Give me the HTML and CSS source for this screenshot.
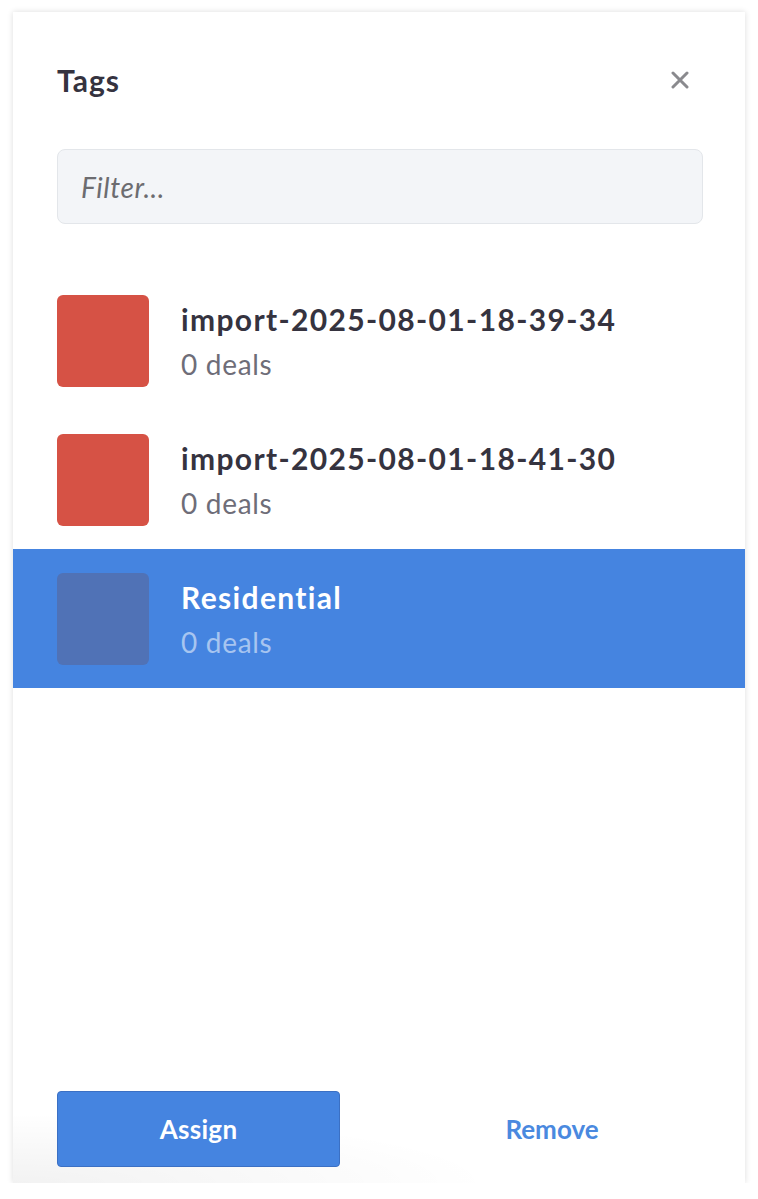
FILE: index.html
```html
<!DOCTYPE html>
<html>
<head>
<meta charset="utf-8">
<link rel="stylesheet" href="styles.css">
</head>
<body>
<div class="panel">
  <div class="header">
    <h1 class="title">Tags</h1>
    <span class="close" aria-label="Close">
      <svg width="18" height="18" viewBox="0 0 18 18"><path d="M2 2L16 16M16 2L2 16" stroke="#8a8a8e" stroke-width="3" stroke-linecap="round"/></svg>
    </span>
  </div>
  <div class="filter-wrap">
    <div class="filter">Filter...</div>
  </div>
  <ul class="tags">
    <li class="tag">
      <span class="swatch red"></span>
      <div class="info">
        <div class="name">import-2025-08-01-18-39-34</div>
        <div class="count">0 deals</div>
      </div>
    </li>
    <li class="tag">
      <span class="swatch red"></span>
      <div class="info">
        <div class="name">import-2025-08-01-18-41-30</div>
        <div class="count">0 deals</div>
      </div>
    </li>
    <li class="tag selected">
      <span class="swatch blue"></span>
      <div class="info">
        <div class="name">Residential</div>
        <div class="count">0 deals</div>
      </div>
    </li>
  </ul>
  <div class="footer">
    <button class="btn primary">Assign</button>
    <button class="btn link">Remove</button>
  </div>
</div>
</body>
</html>
```
FILE: styles.css
```css
* { box-sizing: border-box; }
html, body { margin: 0; padding: 0; background: #ffffff; }
body {
  font-family: Lato, "Open Sans", sans-serif;
  color: #35333f;
  padding: 12px 13px 0 13px;
}
.panel {
  width: 732px;
  height: 1171px;
  background: #fff;
  box-shadow: 0 0 6px rgba(0,0,0,0.14);
  display: flex;
  flex-direction: column;
}
.header {
  display: flex;
  align-items: center;
  justify-content: space-between;
  padding: 48px 56px 0 44px;
}
.title {
  margin: 0;
  font-size: 30px;
  font-weight: 700;
  letter-spacing: 1px;
  color: #35333f;
  line-height: 40px;
}
.close { display: flex; }
.filter-wrap { padding: 49px 42px 0 44px; }
.filter {
  height: 75px;
  background: #f3f5f8;
  border: 1.5px solid #e3e6ea;
  border-radius: 8px;
  display: flex;
  align-items: center;
  padding-left: 23px;
  font-size: 28px;
  font-style: italic;
  letter-spacing: 0.6px;
  color: #6c6c70;
}
.tags {
  list-style: none;
  margin: 0;
  padding: 47px 0 0 0;
  flex: 1;
}
.tag {
  display: flex;
  align-items: center;
  height: 139px;
  padding-left: 44px;
}
.swatch {
  width: 92px;
  height: 92px;
  border-radius: 6px;
  flex: none;
}
.swatch.red { background: #d65245; }
.swatch.blue { background: #5072b6; }
.info { margin-left: 32px; }
.name {
  font-size: 30px;
  font-weight: 700;
  letter-spacing: 1.35px;
  color: #35333f;
  line-height: 38px;
}
.count {
  font-size: 28px;
  letter-spacing: 0.7px;
  color: #6e6d78;
  line-height: 36px;
  margin-top: 8px;
}
.tag.selected { background: #4584e0; }
.tag.selected .name { color: #fff; }
.tag.selected .count { color: #a7c5f0; }
.footer {
  display: flex;
  align-items: center;
  padding: 0 42px 16px 44px;
  background: radial-gradient(ellipse 480px 70px at 0% 100%, rgba(0,0,0,0.05), rgba(0,0,0,0) 100%);
}
.btn {
  font-family: Lato, "Open Sans", sans-serif;
  font-size: 26px;
  font-weight: 700;
  height: 76px;
  cursor: pointer;
}
.btn.primary {
  width: 283px;
  background: #4584e0;
  color: #fff;
  border: 1px solid #3b70c4;
  border-radius: 4px;
  letter-spacing: 0.3px;
}
.btn.link {
  flex: 1;
  margin-left: 61px;
  background: none;
  border: none;
  color: #4a89df;
}
```
